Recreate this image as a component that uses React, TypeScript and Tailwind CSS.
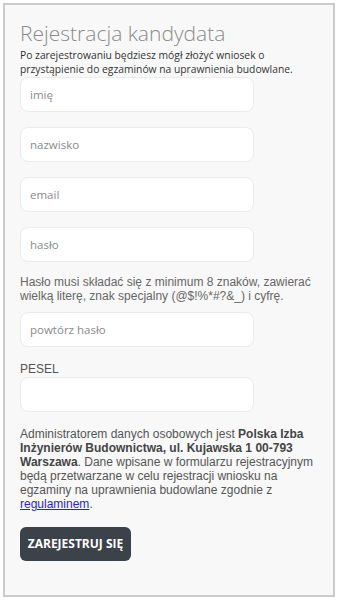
import React from 'react';

const Field: React.FC<{ placeholder?: string }> = ({ placeholder }) => (
  <input
    type="text"
    placeholder={placeholder}
    className="block w-[234px] h-[35px] rounded-lg border border-[#ebebeb] bg-white px-[9px] text-[11.5px] text-[#555] placeholder:text-[#8a8a8a] outline-none"
    style={{ fontFamily: '"Open Sans", sans-serif' }}
  />
);

const App: React.FC = () => {
  return (
    <div className="min-h-screen bg-white p-[3px]">
      <div className="h-[594px] border-2 border-[#cbcbcb] bg-[#f8f8f8] px-[15px] pt-[13px]">
        <h1 className="text-[21px] font-light leading-[30px] text-[#8a8a8a] font-['Open_Sans',sans-serif]">
          Rejestracja kandydata
        </h1>
        <p className="text-[10.3px] leading-[14px] text-[#333] font-['Open_Sans',sans-serif]">
          Po zarejestrowaniu będziesz mógł złożyć wniosek o przystąpienie do egzaminów na uprawnienia budowlane.
        </p>

        <div className="mt-[1px] flex flex-col gap-[15px]">
          <Field placeholder="imię" />
          <Field placeholder="nazwisko" />
          <Field placeholder="email" />
          <Field placeholder="hasło" />
        </div>

        <p className="mt-[13px] text-[12px] leading-[14px] text-[#666] font-['Liberation_Sans',Arial,sans-serif]">
          Hasło musi składać się z minimum 8 znaków, zawierać wielką literę, znak specjalny (@$!%*#?&_) i cyfrę.
        </p>

        <div className="mt-[9px]">
          <Field placeholder="powtórz hasło" />
        </div>

        <label className="mt-[14px] block text-[12px] leading-[16px] text-[#555] font-['Liberation_Sans',Arial,sans-serif]">
          PESEL
        </label>
        <Field />

        <p className="mt-[15px] text-[12px] leading-[14px] text-[#555] font-['Liberation_Sans',Arial,sans-serif]">
          Administratorem danych osobowych jest{' '}
          <b className="text-[#444]">Polska Izba Inżynierów Budownictwa, ul. Kujawska 1 00-793 Warszawa</b>. Dane
          wpisane w formularzu rejestracyjnym będą przetwarzane w celu rejestracji wniosku na egzaminy na uprawnienia
          budowlane zgodnie z{' '}
          <a href="#" className="text-[#2a1fd6] underline">
            regulaminem
          </a>
          .
        </p>

        <button className="mt-[16px] h-[34px] w-[111px] rounded-md bg-[#3c424a] text-[12px] font-bold text-white font-['Open_Sans',sans-serif]">
          ZAREJESTRUJ SIĘ
        </button>
      </div>
    </div>
  );
};

export default App;
